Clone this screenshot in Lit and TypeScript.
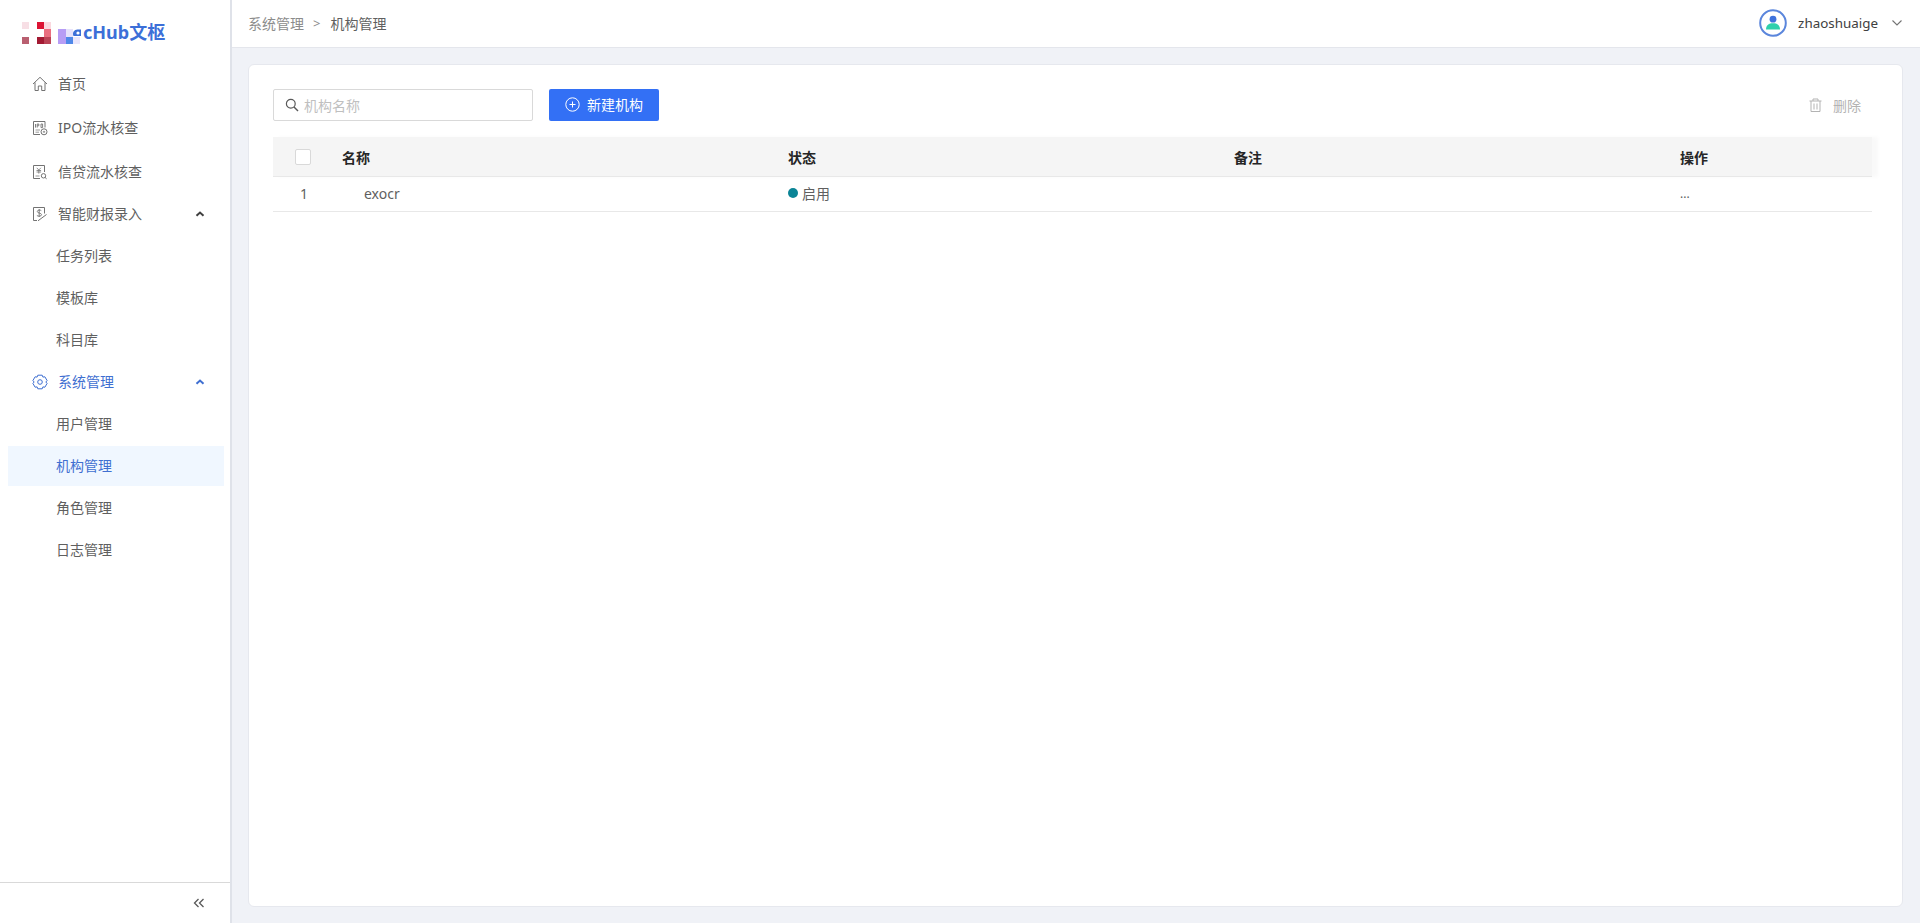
import { LitElement, html, css, svg } from "lit";
import { customElement } from "lit/decorators.js";

const I = {
  home: svg`<path d="M1 8 8 1.3 15 8M3 6.4V14.5H6.3V10H9.7V14.5H13V6.4" fill="none" stroke="#737373" stroke-width="1"/>`,
  ipo: svg`<path d="M8 14.5H1.5V1.5H13V7.5" fill="none" stroke="#737373"/><path d="M3.5 4v3.6M5.2 7.6V4h1.6v1.8H5.2M9 4h1.6v3.6H9z" fill="none" stroke="#737373" stroke-width=".9"/><path d="M3.5 10H8M3.5 12.2H7" stroke="#999"/><circle cx="12" cy="11.8" r="3" fill="#fff" stroke="#737373"/><path d="M10.8 11.8h2.4M12 10.8v2.2" stroke="#737373" stroke-width=".7"/>`,
  credit: svg`<path d="M8 14.5H1.5V1.5H12.5V8" fill="none" stroke="#737373"/><path d="M4.7 3.8 6.8 6l2.1-2.2M4.5 6.5h4.6M6.8 6v3.6M4.5 8h4.6" fill="none" stroke="#737373" stroke-width=".8"/><path d="M3.5 12h4" stroke="#999"/><circle cx="11.5" cy="11.8" r="2.2" fill="#fff" stroke="#737373"/><path d="M13 13.4l1.6 1.4" stroke="#737373"/>`,
  report: svg`<path d="M5 14.5H1.5V1.5H12.5V7.5" fill="none" stroke="#737373"/><path d="M9.3 4.6C8.6 3.9 5.2 3.6 5.3 5.6c.1 1.9 4.2 1.1 4.2 3.1 0 2-3.7 1.7-4.6.8M7.2 3v8" fill="none" stroke="#737373" stroke-width=".9"/><path d="M6 14.8 14.5 8.5" stroke="#737373"/>`,
  gear: svg`<path d="M5.8 1.2h4.4l.7 1.9 2-.3 2.2 3.8-1.3 1.4 1.3 1.4-2.2 3.8-2-.3-.7 1.9H5.8l-.7-1.9-2 .3-2.2-3.8 1.3-1.4-1.3-1.4 2.2-3.8 2 .3z" fill="none" stroke="#3f6fd1" stroke-linejoin="round"/><circle cx="8" cy="8" r="2.3" fill="none" stroke="#3f6fd1"/>`,
};
const icon = (p: unknown) => html`<svg class="ic" viewBox="0 0 16 16" width="16" height="16">${p}</svg>`;
const up = (c: string) => html`<svg class="chev" viewBox="0 0 10 6" width="10" height="6"><path d="M1.5 4.8 5 1.5l3.5 3.3" fill="none" stroke="${c}" stroke-width="2"/></svg>`;

@customElement("app-root")
export class AppRoot extends LitElement {
  static styles = css`
    :host { display: flex; width: 1920px; height: 923px; overflow: hidden; background: #f0f2f7; color: #5f5f5f;
      font: 14px "Noto Sans", "Noto Sans CJK SC", sans-serif; }
    * { box-sizing: border-box; }
    .side { width: 232px; flex: none; background: #fff; border-right: 2px solid #dfe2e9; display: flex; flex-direction: column; }
    .logo { height: 63px; display: flex; align-items: flex-start; padding: 22px 0 0 22px; }
    .logo svg { display: block; flex: none; }
    .logo span { font-size: 18px; font-weight: 700; line-height: 22px; color: #3c6fd8; margin: -1px 0 0 1px; white-space: nowrap; }
    .menu { flex: 1; }
    .it { height: 42px; display: flex; align-items: center; padding-left: 32px; line-height: 20px; white-space: nowrap; }
    .it.gap { margin-bottom: 2px; }
    .ic { flex: none; margin-right: 10px; display: block; }
    .chev { margin-left: auto; margin-right: 25px; display: block; }
    .it.act { color: #3f6fd1; }
    .sub { height: 42px; display: flex; align-items: center; padding: 0 0 2px 56px; }
    .sub.sel { background: #f0f7ff; color: #3f6fd1; margin: 1px 6px 1px 8px; padding-left: 48px; height: 40px; }
    .foot { height: 41px; border-top: 1px solid #d9d9d9; display: flex; justify-content: flex-end; align-items: center; padding-right: 25px; }
    .main { flex: 1; display: flex; flex-direction: column; min-width: 0; }
    .head { height: 48px; background: #fff; border-bottom: 1px solid #e4e6ec; display: flex; align-items: center; padding: 0 17px 2px 16px; }
    .crumb { color: #8c8c8c; }
    .sep { margin: 0 10px 0 9px; color: #8c8c8c; font-size: 13px; }
    .user { margin-left: auto; display: flex; align-items: center; color: #404040; }
    .user svg { display: block; }
    .name { margin: 0 13px 0 11px; font-size: 13.4px; }
    .card { flex: 1; margin: 16px 17px 16px 16px; background: #fff; border: 1px solid #e6e8ee; border-radius: 6px; padding: 24px 30px 0 24px; }
    .bar { display: flex; align-items: center; height: 32px; margin-bottom: 16px; }
    .search { width: 260px; height: 32px; border: 1px solid #d9d9d9; border-radius: 2px; display: flex; align-items: center; padding-left: 11px; color: #bfbfbf; }
    .search svg { margin-right: 5px; display: block; }
    .btn { margin-left: 16px; width: 110px; height: 32px; background: #3370f5; color: #fff; border-radius: 2px; display: flex; align-items: center; justify-content: center; gap: 7px; padding-bottom: 2px; }
    .btn svg { display: block; }
    .del { margin-left: auto; margin-right: 11px; color: #b3b3b3; display: flex; align-items: center; gap: 11px; }
    .del svg { display: block; }
    .row { display: grid; grid-template-columns: 69px 446px 446px 446px 193px; align-items: center; }
    .th { height: 40px; background: #f5f5f5; border-bottom: 1px solid #e8e8e8; color: #262626; font-weight: 700; box-shadow: 6px 0 4px #f9f9f9; }
    .td { height: 35px; border-bottom: 1px solid #e8e8e8; padding-bottom: 2px; }
    .cb { width: 16px; height: 16px; background: #fff; border: 1px solid #d9d9d9; border-radius: 2px; margin-left: 22px; }
    .num { padding-left: 27px; }
    .ex { padding-left: 22px; }
    .st { display: flex; align-items: center; gap: 4px; }
    .dot { width: 10px; height: 10px; border-radius: 50%; background: #0b8496; }
    .more { font-size: 12px; }
  `;

  render() {
    return html`
      <aside class="side">
        <div class="logo">
          <svg width="60" height="22" viewBox="0 0 60 22">
            <rect x="0" y="0" width="7" height="7" fill="#f7dfe5"/>
            <rect x="15" y="0" width="7" height="7" fill="#dc1434"/>
            <rect x="22" y="0" width="7" height="7" fill="#fbd9df"/>
            <rect x="22" y="7" width="7" height="8" fill="#ea6f80"/>
            <rect x="0" y="15" width="7" height="7" fill="#b95f70"/>
            <rect x="15" y="15" width="7" height="7" fill="#a31a33"/>
            <rect x="22" y="15" width="7" height="7" fill="#bb4356"/>
            <rect x="36" y="7" width="8" height="15" fill="#b79df5"/>
            <rect x="44" y="15" width="7" height="7" fill="#4f88e8"/>
            <rect x="51" y="15" width="7" height="7" fill="#eae6fc"/>
            <rect x="44" y="7" width="7" height="8" fill="#e6e2fb"/>
            <path d="M51.5 14a4.5 4.5 0 0 1 4-6.6h3.5v6.6z" fill="#3c6fd8"/>
            <circle cx="56" cy="11" r="1.6" fill="#fff"/>
          </svg>
          <span>cHub文枢</span>
        </div>
        <div class="menu">
          <div class="it gap">${icon(I.home)}首页</div>
          <div class="it gap">${icon(I.ipo)}IPO流水核查</div>
          <div class="it">${icon(I.credit)}信贷流水核查</div>
          <div class="it">${icon(I.report)}智能财报录入${up("#404040")}</div>
          <div class="sub">任务列表</div>
          <div class="sub">模板库</div>
          <div class="sub">科目库</div>
          <div class="it act">${icon(I.gear)}系统管理${up("#3f6fd1")}</div>
          <div class="sub">用户管理</div>
          <div class="sub sel">机构管理</div>
          <div class="sub">角色管理</div>
          <div class="sub">日志管理</div>
        </div>
        <div class="foot">
          <svg width="12" height="10" viewBox="0 0 12 10"><path d="M5.5 1 1.5 5l4 4M10.5 1l-4 4 4 4" fill="none" stroke="#595959" stroke-width="1.3"/></svg>
        </div>
      </aside>
      <div class="main">
        <header class="head">
          <span class="crumb">系统管理</span><span class="sep">&gt;</span><span>机构管理</span>
          <div class="user">
            <svg width="28" height="28" viewBox="0 0 28 28">
              <circle cx="14" cy="14" r="12.8" fill="#fff" stroke="#5b86dc" stroke-width="2"/>
              <circle cx="14" cy="10.2" r="3.4" fill="#3f72dc"/>
              <path d="M7 20.5c0-4.4 3-6.2 7-6.2s7 1.8 7 6.2z" fill="#2fd0ac"/>
            </svg>
            <span class="name">zhaoshuaige</span>
            <svg width="12" height="8" viewBox="0 0 12 8"><path d="M1.5 1.5 6 6l4.5-4.5" fill="none" stroke="#737373" stroke-width="1.1"/></svg>
          </div>
        </header>
        <section class="card">
          <div class="bar">
            <div class="search">
              <svg width="14" height="14" viewBox="0 0 14 14"><circle cx="5.8" cy="5.8" r="4.4" fill="none" stroke="#595959" stroke-width="1.2"/><path d="M9 9l4 4" stroke="#595959" stroke-width="1.4"/></svg>
              机构名称
            </div>
            <div class="btn">
              <svg width="15" height="15" viewBox="0 0 15 15"><circle cx="7.5" cy="7.5" r="6.7" fill="none" stroke="#fff"/><path d="M4.5 7.5h6M7.5 4.5v6" stroke="#fff"/></svg>
              新建机构
            </div>
            <div class="del">
              <svg width="13" height="14" viewBox="0 0 13 14"><path d="M.5 3h12M4 3V1h5v2M2 3v10.5h9V3M5 5.5v6M8 5.5v6" fill="none" stroke="#b3b3b3"/></svg>
              删除
            </div>
          </div>
          <div class="row th">
            <div><div class="cb"></div></div><div>名称</div><div>状态</div><div>备注</div><div>操作</div>
          </div>
          <div class="row td">
            <div class="num">1</div><div class="ex">exocr</div>
            <div class="st"><i class="dot"></i>启用</div><div></div><div class="more">...</div>
          </div>
        </section>
      </div>
    `;
  }
}
